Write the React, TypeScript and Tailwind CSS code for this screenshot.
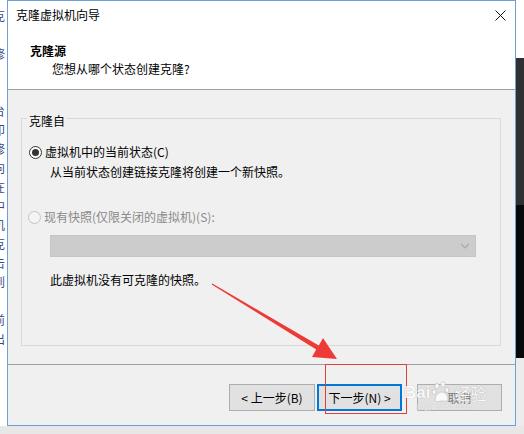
import React from "react";

const font = "font-['Microsoft_YaHei','Noto_Sans_CJK_SC',sans-serif]";

function Radio({ checked, disabled }: { checked?: boolean; disabled?: boolean }) {
  return (
    <span
      className={`flex h-[13px] w-[13px] shrink-0 items-center justify-center rounded-full border ${
        disabled ? "border-[#c4c4c4] bg-[#f4f4f4]" : "border-[#333333] bg-white"
      }`}
    >
      {checked && <span className="h-[7px] w-[7px] rounded-full bg-[#333333]" />}
    </span>
  );
}

function Button({ children, primary, width }: { children: React.ReactNode; primary?: boolean; width: string }) {
  return (
    <button
      className={`flex h-[27px] items-center justify-center bg-[#e1e1e1] text-[12px] text-black ${width} ${
        primary ? "border-2 border-[#0078d7]" : "border border-[#adadad]"
      }`}
    >
      {children}
    </button>
  );
}

// fragments of the document window peeking out on the left
const sideLines = ["克", "", "修", "", "", "台", "印", "修", "向", "在", "中", "机", "克", "击", "到", "", "前", "出"];

export default function App() {
  return (
    <div className={`relative flex h-[434px] w-[524px] flex-col overflow-hidden bg-[#e7e7e7] ${font}`}>
      <div className="flex h-[426px]">
        <div className="w-[7px] overflow-hidden bg-white pt-[6px]">
          {sideLines.map((c, i) => (
            <div key={i} className="ml-[-7px] h-[19px] text-[12px] leading-[19px] text-[#3b4a7a]">
              {c}
            </div>
          ))}
        </div>

        <div className="flex w-[509px] flex-col border border-[#6f9fd4] bg-[#f0f0f0]">
          <div className="h-[89px] border-b border-[#a0a0a0] bg-white">
            <div className="flex h-[28px] items-center justify-between pl-[8px] pr-[9px]">
              <span className="text-[12px] text-black">克隆虚拟机向导</span>
              <svg width="11" height="11" viewBox="0 0 11 11">
                <path d="M0.5 0.5 L10.5 10.5 M10.5 0.5 L0.5 10.5" stroke="#111" strokeWidth="1" />
              </svg>
            </div>
            <div className="mt-[14px] pl-[22px] text-[12px] font-bold leading-[16px] text-black">克隆源</div>
            <div className="mt-[2px] pl-[44px] text-[12px] leading-[16px] text-black">您想从哪个状态创建克隆?</div>
          </div>

          <div className="h-[274px] pb-[18px] pl-[13px] pr-[14px] pt-[18px]">
            <fieldset className="h-full border border-[#d9d9d9]">
              <legend className="ml-[5px] px-[2px] pt-[6px] text-[12px] leading-[14px] text-black">克隆自</legend>
              <div className="mt-[16px] flex h-[16px] items-center gap-[3px] pl-[7px]">
                <Radio checked />
                <span className="text-[12px] text-black">虚拟机中的当前状态(C)</span>
              </div>
              <div className="mt-[4px] h-[16px] pl-[28px] text-[12px] leading-[16px] text-black">
                从当前状态创建链接克隆将创建一个新快照。
              </div>
              <div className="mt-[29px] flex h-[16px] items-center gap-[3px] pl-[6px]">
                <Radio disabled />
                <span className="text-[12px] text-[#8a8a8a]">现有快照(仅限关闭的虚拟机)(S):</span>
              </div>
              <div className="ml-[28px] mt-[10px] flex h-[22px] w-[426px] items-center justify-end border border-[#c6c6c6] bg-[#cccccc] pr-[5px]">
                <svg width="10" height="6" viewBox="0 0 10 6">
                  <path d="M1 1 L5 5 L9 1" fill="none" stroke="#a9a9a9" strokeWidth="1.2" />
                </svg>
              </div>
              <div className="mt-[15px] h-[16px] pl-[28px] text-[12px] leading-[16px] text-black">
                此虚拟机没有可克隆的快照。
              </div>
            </fieldset>
          </div>

          <div className="flex flex-1 items-start justify-end border-t border-[#a0a0a0] pr-[13px] pt-[19px]">
            <Button width="w-[86px]">&lt; 上一步(B)</Button>
            <div className="w-[2px]" />
            <Button width="w-[85px]" primary>
              下一步(N) &gt;
            </Button>
            <div className="w-[15px]" />
            <Button width="w-[85px]">
              <span className="text-[#7a7a7a]">取消</span>
            </Button>
          </div>
        </div>

        <div className="flex w-[8px] flex-col">
          <div className="h-[58px] bg-white" />
          <div className="h-[147px] bg-[#2e3033]" />
          <div className="h-[153px] bg-[#08090b]" />
          <div className="flex-1 bg-[#ececec]" />
        </div>
      </div>
      <div className="h-[8px] bg-[#e7e7e7]" />

      {/* red annotation: box around the next button and the pointing arrow */}
      <div className="absolute left-[325px] top-[364px] h-[50px] w-[82px] border border-[#e0403c]" />
      <svg className="pointer-events-none absolute left-0 top-0" width="524" height="434">
        <polygon
          points="212.3,283.6 318.8,345.4 323,338 337,359 312,357 316.2,349.6 211.7,284.4"
          fill="#ee3a36"
        />
      </svg>

      {/* watermark */}
      <div className="pointer-events-none absolute left-[404px] top-[381px] flex flex-col items-center opacity-80">
        <div className="flex items-end gap-[1px]">
          <span className="text-[17px] font-bold leading-[20px] text-white [text-shadow:0_0_1px_rgba(0,0,0,0.35)] font-['Liberation_Sans',sans-serif]">
            Bai
          </span>
          <svg width="22" height="22" viewBox="0 0 22 22">
            <g fill="white" stroke="#bdbdbd" strokeWidth="0.8">
              <ellipse cx="6" cy="5" rx="2.2" ry="2.8" />
              <ellipse cx="12" cy="3.5" rx="2.2" ry="2.8" />
              <ellipse cx="3" cy="11" rx="2" ry="2.5" />
              <ellipse cx="16" cy="9" rx="2" ry="2.5" />
              <path d="M4 19 C4 13 9 11 11 11 C14 11 17 14 17 18 C17 21 13 20 11 20 C8 20 4 22 4 19 Z" />
            </g>
          </svg>
          <span className="text-[16px] leading-[20px] text-white [text-shadow:0_0_1px_rgba(0,0,0,0.35)]">经验</span>
        </div>
        <span className="text-[7px] leading-[8px] text-white [text-shadow:0_0_1px_rgba(0,0,0,0.3)] font-['Liberation_Sans',sans-serif]">
          jingyan.baidu.com
        </span>
      </div>
    </div>
  );
}
